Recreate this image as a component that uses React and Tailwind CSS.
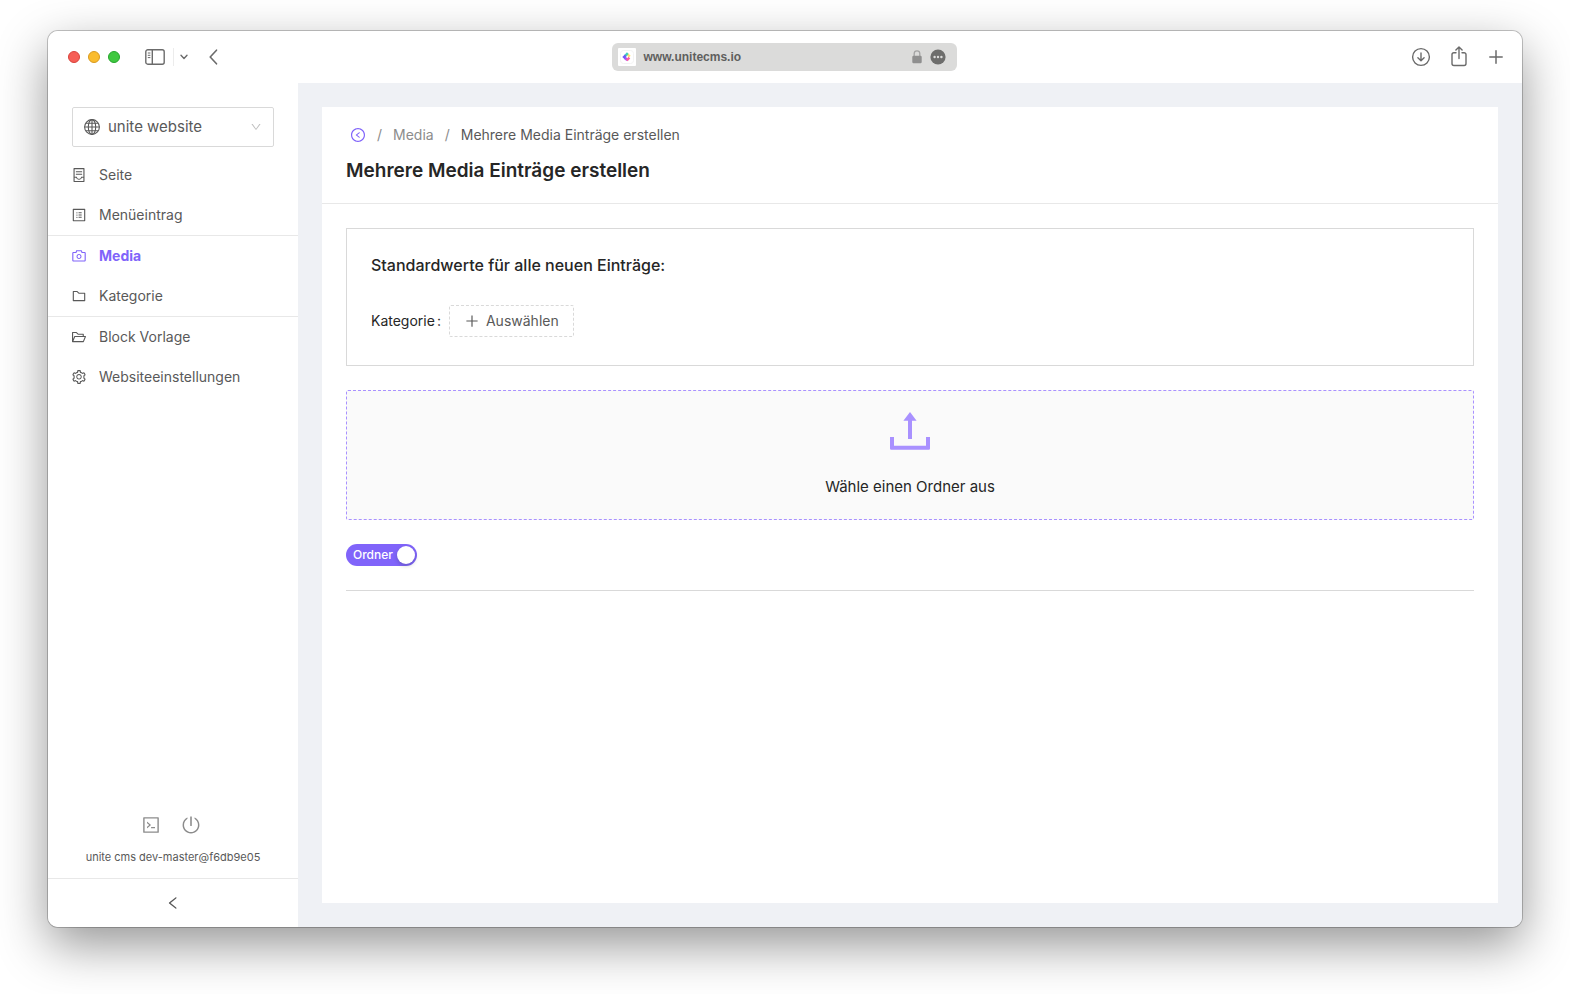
import {
  AiOutlineCamera,
  AiOutlineCode,
  AiOutlineContainer,
  AiOutlineDown,
  AiOutlineFolder,
  AiOutlineFolderOpen,
  AiOutlineLeft,
  AiOutlineLeftCircle,
  AiOutlinePlus,
  AiOutlinePoweroff,
  AiOutlineProfile,
  AiOutlineSetting,
} from "react-icons/ai";

const menuGroups = [
  [
    { label: "Seite", Icon: AiOutlineContainer },
    { label: "Menüeintrag", Icon: AiOutlineProfile },
  ],
  [
    { label: "Media", Icon: AiOutlineCamera, active: true },
    { label: "Kategorie", Icon: AiOutlineFolder },
  ],
  [
    { label: "Block Vorlage", Icon: AiOutlineFolderOpen },
    { label: "Websiteeinstellungen", Icon: AiOutlineSetting },
  ],
];

function SidebarIcon() {
  return (
    <svg width="20" height="16" viewBox="0 0 20 16" fill="none" stroke="currentColor" strokeWidth="1.4">
      <rect x="0.8" y="0.8" width="18.4" height="14.4" rx="2" />
      <path d="M7.3 1v14" />
      <path d="M2.8 4h2.6M2.8 6.3h2.6M2.8 8.6h2.6" strokeWidth="1" />
    </svg>
  );
}

function ChevronLeft() {
  return (
    <svg width="9" height="16" viewBox="0 0 9 16" fill="none" stroke="currentColor" strokeWidth="1.6" strokeLinecap="round" strokeLinejoin="round">
      <path d="M7.5 1.2 1.2 8l6.3 6.8" />
    </svg>
  );
}

function ChevronDownSmall() {
  return (
    <svg width="8" height="6" viewBox="0 0 8 6" fill="none" stroke="currentColor" strokeWidth="1.4" strokeLinecap="round" strokeLinejoin="round">
      <path d="M1 1.2 4 4.4l3-3.2" />
    </svg>
  );
}

function DownloadIcon() {
  return (
    <svg width="20" height="20" viewBox="0 0 20 20" fill="none" stroke="currentColor" strokeWidth="1.4" strokeLinecap="round" strokeLinejoin="round">
      <circle cx="10" cy="10" r="8.4" />
      <path d="M10 6v7.600M6.900 10.700l3.100 3.100 3.100-3.100" />
    </svg>
  );
}

function ShareIcon() {
  return (
    <svg width="16" height="22" viewBox="0 0 16 22" fill="none" stroke="currentColor" strokeWidth="1.4" strokeLinecap="round" strokeLinejoin="round">
      <path d="M5 6.700H2.900A1.900 1.900 0 0 0 1 8.600v9a1.900 1.900 0 0 0 1.900 1.900h10.200a1.900 1.900 0 0 0 1.900-1.900v-9a1.900 1.900 0 0 0-1.900-1.900H11" />
      <path d="M8 12.600V1.200M4.900 4 8 .9 11.100 4" />
    </svg>
  );
}

function PlusThin() {
  return (
    <svg width="14" height="14" viewBox="0 0 14 14" stroke="currentColor" strokeWidth="1.5" strokeLinecap="round">
      <path d="M7 .8v12.400M.8 7h12.400" />
    </svg>
  );
}

function LockIcon() {
  return (
    <svg width="10" height="14" viewBox="0 0 10 14" fill="none">
      <path d="M2.200 7V3.600a2.800 2.800 0 0 1 5.600 0V7" stroke="#a3a3a3" strokeWidth="1.3" />
      <rect x="0.3" y="5.800" width="9.400" height="7.400" rx="1.200" fill="#8f8f8f" />
    </svg>
  );
}

function MoreIcon() {
  return (
    <svg width="16" height="16" viewBox="0 0 16 16">
      <circle cx="8" cy="8" r="7.6" fill="#6d6d6c" />
      <g fill="#dcdcdb">
        <circle cx="4.6" cy="8" r="1.2" />
        <circle cx="8" cy="8" r="1.2" />
        <circle cx="11.4" cy="8" r="1.2" />
      </g>
    </svg>
  );
}

function Favicon() {
  return (
    <svg width="18" height="18" viewBox="0 0 18 18" fill="none" strokeWidth="2.4">
      <rect width="18" height="18" rx="1" fill="#fff" />
      <rect x="2.500" y="2.500" width="13" height="13" rx="3" stroke="#f3f3f3" strokeWidth="1" />
      <path d="M9 5.800 11.800 8.600" stroke="#ffe169" />
      <path d="M9.800 5.200 7 8" stroke="#3fcfb8" />
      <path d="M7.700 7.300 6 9 7.700 10.700" stroke="#6a5bf7" />
      <path d="M7.200 10.200 9.200 12.200" stroke="#b04af2" />
      <path d="M8.800 12.300 11.400 9.700" stroke="#fb5c9c" />
    </svg>
  );
}

function GlobeIcon() {
  return (
    <svg width="16" height="16" viewBox="0 0 16 16" fill="none" stroke="currentColor" strokeWidth="1.1" className="shrink-0">
      <circle cx="8" cy="8" r="7.400" />
      <ellipse cx="8" cy="8" rx="3.700" ry="7.400" />
      <path d="M8 .6v14.800M.6 8h14.800M1.700 4.300h12.600M1.700 11.700h12.600" />
    </svg>
  );
}

function UploadIcon() {
  return (
    <svg width="40" height="38" viewBox="0 0 40 38" fill="#a991ff">
      <path d="M20 0 26.600 8.800H22V27h-4V8.800h-4.600z" />
      <path d="M0 25h4v8.800h32V25h4v11.500a1.200 1.200 0 0 1-1.200 1.200H1.200A1.200 1.200 0 0 1 0 36.500z" />
    </svg>
  );
}

function TitleBar() {
  return (
    <header className="grid h-13 shrink-0 grid-cols-[1fr_345px_1fr] items-center bg-white pr-0.5 text-[#6b6b6b]">
      <div className="flex items-center pl-5">
        <div className="flex gap-2">
          <span className="size-3 rounded-full border border-[#d8433c] bg-[#f65e56]" />
          <span className="size-3 rounded-full border border-[#d99a1f] bg-[#fabc2e]" />
          <span className="size-3 rounded-full border border-[#26a52c] bg-[#3fc840]" />
        </div>
        <button type="button" aria-label="Seitenleiste" className="ml-[25px]">
          <SidebarIcon />
        </button>
        <span className="ml-2 h-[18px] w-px bg-[#ececec]" />
        <button type="button" aria-label="Tabgruppen" className="ml-1.5">
          <ChevronDownSmall />
        </button>
        <button type="button" aria-label="Zurück" className="ml-[21px]">
          <ChevronLeft />
        </button>
      </div>
      <div className="flex h-7 items-center rounded-md bg-[#dbdbda] pr-[11px] pl-1.5">
        <Favicon />
        <span className="ml-2 flex-1 font-['Liberation_Sans',sans-serif] text-xs font-bold text-[#5f5f5e]">www.unitecms.io</span>
        <LockIcon />
        <button type="button" aria-label="Mehr" className="ml-2">
          <MoreIcon />
        </button>
      </div>
      <div className="flex items-center justify-end pr-[17px]">
        <button type="button" aria-label="Downloads">
          <DownloadIcon />
        </button>
        <button type="button" aria-label="Teilen" className="ml-5">
          <ShareIcon />
        </button>
        <button type="button" aria-label="Neuer Tab" className="ml-[22px]">
          <PlusThin />
        </button>
      </div>
    </header>
  );
}

function Sidebar() {
  return (
    <aside className="flex w-[250px] shrink-0 flex-col bg-white pt-6 text-[#595959]">
      <div className="mx-6 mb-2 flex h-10 items-center rounded-xs border border-[#d9d9d9] pl-[11px]">
        <GlobeIcon />
        <select aria-label="Website" className="h-full min-w-0 flex-1 appearance-none bg-transparent pl-2 text-[15px] outline-none">
          <option>unite website</option>
        </select>
        <AiOutlineDown className="pointer-events-none mr-[11px] size-3 text-[#bfbfbf]" />
      </div>
      <nav className="divide-y divide-[#e8e8e8]">
        {menuGroups.map((group) => (
          <ul key={group[0].label}>
            {group.map(({ label, Icon, active }) => (
              <li key={label}>
                <a
                  href="#"
                  className={
                    active
                      ? "flex h-10 items-center gap-3 pl-[23px] text-sm font-bold text-[#8064fa]"
                      : "flex h-10 items-center gap-3 pl-[23px] text-sm"
                  }
                >
                  <Icon className="size-4" />
                  {label}
                </a>
              </li>
            ))}
          </ul>
        ))}
      </nav>
      <div className="mt-auto flex flex-col items-center pb-[11px]">
        <div className="mr-1 flex gap-5 text-[#8c8c8c]">
          <button type="button" aria-label="Konsole">
            <AiOutlineCode className="size-5" />
          </button>
          <button type="button" aria-label="Abmelden">
            <AiOutlinePoweroff className="size-5" />
          </button>
        </div>
        <p className="mt-3 text-[11px] leading-5">unite cms dev-master@f6db9e05</p>
      </div>
      <button type="button" aria-label="Menü einklappen" className="flex h-[49px] items-center justify-center border-t border-[#e8e8e8]">
        <AiOutlineLeft className="size-4" />
      </button>
    </aside>
  );
}

function PageHeader() {
  return (
    <div className="border-b border-[#e8e8e8] px-6 pt-4 pb-4">
      <nav aria-label="Brotkrumen" className="flex h-6 items-center gap-[11px] pl-1 text-sm text-[#8c8c8c]">
        <a href="#" aria-label="Zurück" className="text-[#8064fa]">
          <AiOutlineLeftCircle className="size-4" />
        </a>
        <span>/</span>
        <a href="#">Media</a>
        <span>/</span>
        <span className="text-[#595959]">Mehrere Media Einträge erstellen</span>
      </nav>
      <h1 className="mt-2 text-[19px] leading-8 font-semibold text-[#262626]">Mehrere Media Einträge erstellen</h1>
    </div>
  );
}

export default function App() {
  return (
    <div className="flex min-h-screen flex-col bg-white px-12 pt-[31px] pb-[67px] font-[Inter,sans-serif] text-[#262626]">
      <div className="flex flex-1 flex-col overflow-hidden rounded-[10px] shadow-[0_0_0_1px_rgba(0,0,0,0.22),0_18px_50px_0_rgba(0,0,0,0.42)]">
        <TitleBar />
        <div className="flex flex-1">
          <Sidebar />
          <main className="flex min-w-0 flex-1 flex-col bg-[#eff1f5] p-6">
            <div className="flex-1 bg-white">
              <PageHeader />
              <div className="p-6">
                <section className="border border-[#d9d9d9] px-6 pt-6 pb-7">
                  <h2 className="text-base leading-6 font-medium">Standardwerte für alle neuen Einträge:</h2>
                  <div className="mt-7 flex items-center text-sm">
                    <label htmlFor="kategorie" className="flex gap-0.5">
                      <span>Kategorie</span>
                      <span>:</span>
                    </label>
                    <button
                      id="kategorie"
                      type="button"
                      className="ml-2 flex h-8 items-center gap-1.5 rounded-xs border border-dashed border-[#d9d9d9] px-3.5 text-[#595959]"
                    >
                      <AiOutlinePlus className="size-4" />
                      Auswählen
                    </button>
                  </div>
                </section>
                <label className="relative mt-6 flex h-[130px] cursor-pointer flex-col items-center rounded-xs border border-dashed border-[#a991ff] bg-[#fafafa] pt-[21px]">
                  <input type="file" className="sr-only" />
                  <UploadIcon />
                  <span className="mt-[25px] text-[15px] leading-6">Wähle einen Ordner aus</span>
                </label>
                <label className="relative mt-6 flex h-[22px] w-[71px] cursor-pointer items-center justify-between rounded-full bg-[#8064fa] pr-0.5 pl-[7px] text-xs font-medium text-white">
                  <input type="checkbox" role="switch" defaultChecked className="sr-only" />
                  Ordner
                  <span className="size-[18px] rounded-full bg-white shadow-[0_2px_4px_0_rgba(0,35,11,0.2)]" />
                </label>
                <hr className="mt-6 border-[#d9d9d9]" />
              </div>
            </div>
          </main>
        </div>
      </div>
    </div>
  );
}
